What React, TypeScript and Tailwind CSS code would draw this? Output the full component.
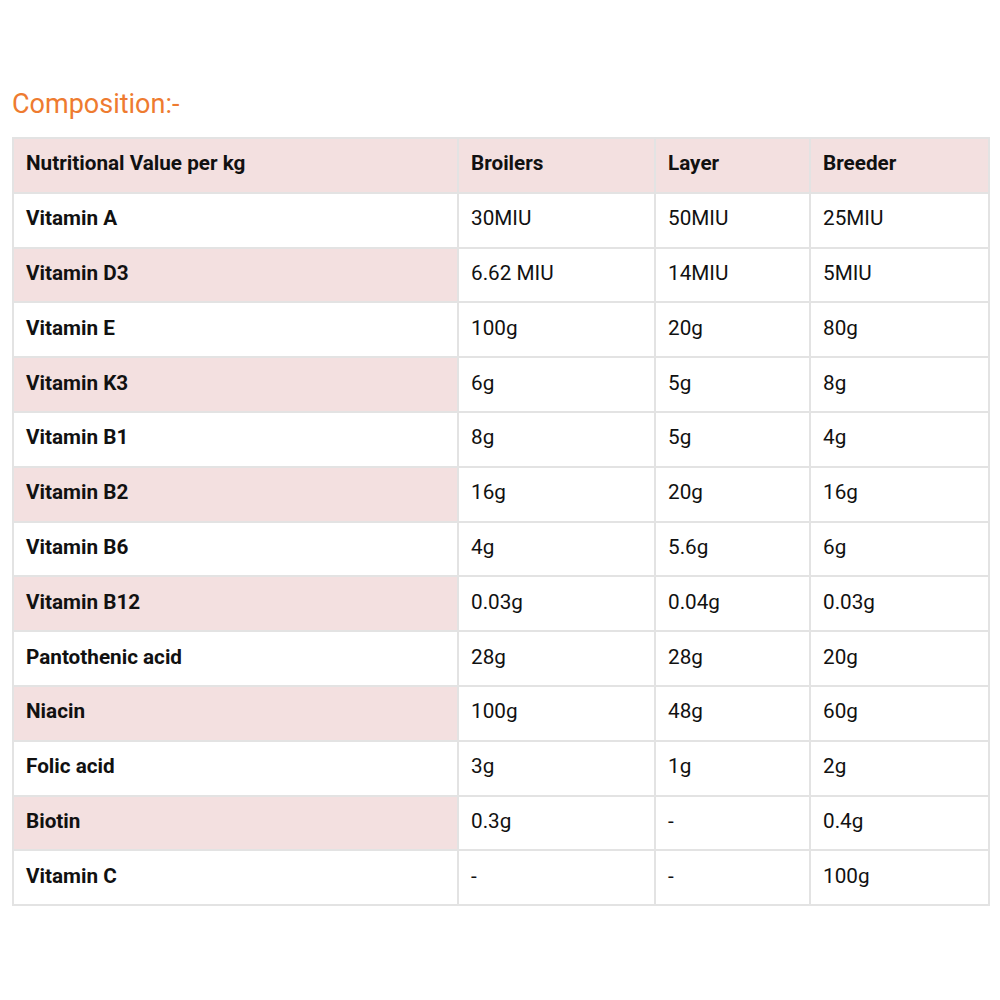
import React from 'react';

const rows: [string, string, string, string][] = [
  ['Vitamin A', '30MIU', '50MIU', '25MIU'],
  ['Vitamin D3', '6.62 MIU', '14MIU', '5MIU'],
  ['Vitamin E', '100g', '20g', '80g'],
  ['Vitamin K3', '6g', '5g', '8g'],
  ['Vitamin B1', '8g', '5g', '4g'],
  ['Vitamin B2', '16g', '20g', '16g'],
  ['Vitamin B6', '4g', '5.6g', '6g'],
  ['Vitamin B12', '0.03g', '0.04g', '0.03g'],
  ['Pantothenic acid', '28g', '28g', '20g'],
  ['Niacin', '100g', '48g', '60g'],
  ['Folic acid', '3g', '1g', '2g'],
  ['Biotin', '0.3g', '-', '0.4g'],
  ['Vitamin C', '-', '-', '100g'],
];

const cell = 'border-2 border-[#e3e3e3] pl-[12px] pb-[4px]';

export default function App() {
  return (
    <div className="w-[1000px] h-[1000px] bg-white px-3 pt-[88px] font-['Roboto',sans-serif] text-[#111]">
      <h2 className="text-[27px] leading-[32px] text-[#ee7b30] mb-[17px]">Composition:-</h2>
      <table className="w-[978px] border-collapse border-2 border-[#e3e3e3] text-[20.7px] leading-[24px]">
        <colgroup>
          <col className="w-[445px]" />
          <col className="w-[197px]" />
          <col className="w-[155px]" />
          <col />
        </colgroup>
        <thead>
          <tr className="h-[54.8px] bg-[#f3e0e0]">
            <th className={`${cell} text-left font-bold`}>Nutritional Value per kg</th>
            <th className={`${cell} text-left font-bold`}>Broilers</th>
            <th className={`${cell} text-left font-bold`}>Layer</th>
            <th className={`${cell} text-left font-bold`}>Breeder</th>
          </tr>
        </thead>
        <tbody>
          {rows.map((r, i) => (
            <tr key={r[0]} className="h-[54.8px]">
              <td className={`${cell} font-bold ${i % 2 === 1 ? 'bg-[#f3e0e0]' : 'bg-white'}`}>{r[0]}</td>
              <td className={cell}>{r[1]}</td>
              <td className={cell}>{r[2]}</td>
              <td className={cell}>{r[3]}</td>
            </tr>
          ))}
        </tbody>
      </table>
    </div>
  );
}
